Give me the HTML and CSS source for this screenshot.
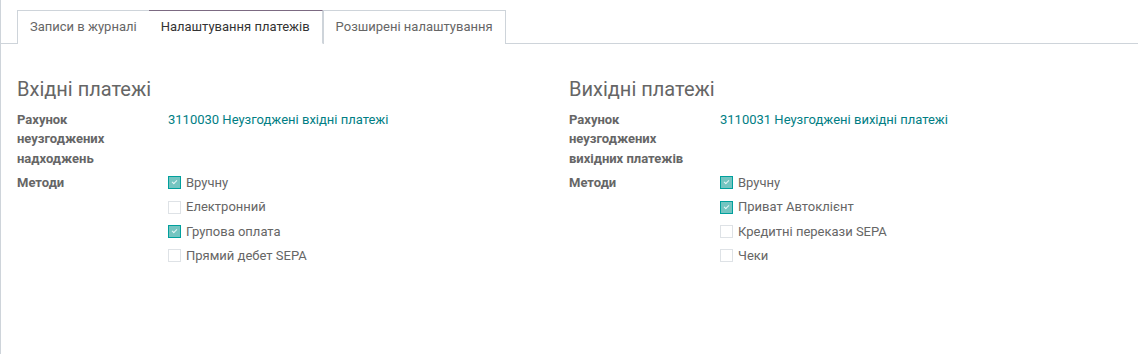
FILE: index.html
```html
<!DOCTYPE html>
<html lang="uk">
<head>
    <meta charset="UTF-8">
    <title>Налаштування платежів</title>
    <link rel="stylesheet" href="styles.css">
</head>
<body>

<div class="sheet">
    <!-- Tabs -->
    <ul class="tabs">
        <li class="tab">Записи в журналі</li>
        <li class="tab active">Налаштування платежів</li>
        <li class="tab">Розширені налаштування</li>
    </ul>

    <div class="pane">
        <!-- Incoming -->
        <div class="group">
            <h2>Вхідні платежі</h2>
            <div class="row">
                <div class="label">Рахунок неузгоджених надходжень</div>
                <div class="value"><a href="#">3110030 Неузгоджені вхідні платежі</a></div>
            </div>
            <div class="row">
                <div class="label">Методи</div>
                <div class="value">
                    <div class="check"><span class="box on"></span>Вручну</div>
                    <div class="check"><span class="box"></span>Електронний</div>
                    <div class="check"><span class="box on"></span>Групова оплата</div>
                    <div class="check"><span class="box"></span>Прямий дебет SEPA</div>
                </div>
            </div>
        </div>

        <!-- Outgoing -->
        <div class="group">
            <h2>Вихідні платежі</h2>
            <div class="row">
                <div class="label">Рахунок неузгоджених вихідних платежів</div>
                <div class="value"><a href="#">3110031 Неузгоджені вихідні платежі</a></div>
            </div>
            <div class="row">
                <div class="label">Методи</div>
                <div class="value">
                    <div class="check"><span class="box on"></span>Вручну</div>
                    <div class="check"><span class="box on"></span>Приват Автоклієнт</div>
                    <div class="check"><span class="box"></span>Кредитні перекази SEPA</div>
                    <div class="check"><span class="box"></span>Чеки</div>
                </div>
            </div>
        </div>
    </div>
</div>

</body>
</html>
```

FILE: styles.css
```css
* {
    margin: 0;
    padding: 0;
    box-sizing: border-box;
}
body {
    font-family: Roboto, "Noto Sans", sans-serif;
    font-size: 13px;
    line-height: 1.5;
    color: #666;
    background: #fff;
}
.sheet {
    min-height: 354px;
    border-left: 1px solid #ced4da;
}
.tabs {
    list-style: none;
    display: flex;
    padding: 10px 0 0 16px;
    border-bottom: 1px solid #ced4da;
}
.tab {
    padding: 6px 12px 6px 12px;
    border: 1px solid #ced4da;
    border-bottom: none;
    margin-bottom: -1px;
    background: #fff;
    color: #666;
}
.tab + .tab {
    border-left: none;
}
.tab.active {
    color: #333;
    border-top: 1px solid #7c6a82;
    border-bottom: 1px solid #fff;
    padding-bottom: 6px;
}
.tab.active + .tab {
    border-left: 1px solid #ced4da;
}
.tab:has(+ .active) {
    border-right: none;
}
.pane {
    display: grid;
    grid-template-columns: 552px 552px;
    padding: 33px 0 0 16px;
}
h2 {
    font-size: 20px;
    font-weight: 400;
    line-height: 24px;
    color: #666;
    margin-bottom: 9px;
}
.row {
    display: grid;
    grid-template-columns: 151px 1fr;
    margin-bottom: 5px;
}
.label {
    font-weight: bold;
    color: #666;
    padding-right: 16px;
}
.value a {
    color: #017e84;
    text-decoration: none;
}
.check {
    display: flex;
    align-items: center;
    margin-bottom: 4.8px;
    color: #666;
}
.box {
    width: 13px;
    height: 13px;
    margin-right: 5px;
    border: 1px solid #dee2e6;
    background: #fff;
    position: relative;
}
.box.on {
    border-color: #01a09d;
    background: #74c5c1;
}
.box.on::after {
    content: "";
    position: absolute;
    left: 3px;
    top: 3px;
    width: 4px;
    height: 2px;
    border-left: 1px solid #e6f6f5;
    border-bottom: 1px solid #e6f6f5;
    transform: rotate(-45deg);
}
```
